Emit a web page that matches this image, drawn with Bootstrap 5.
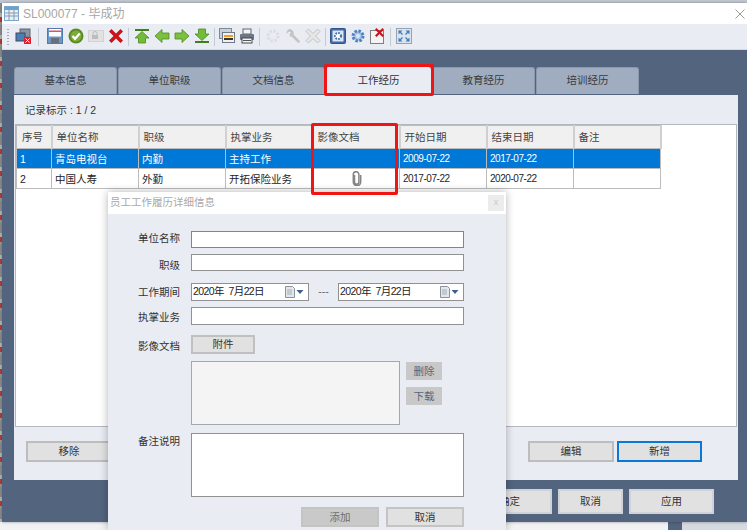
<!DOCTYPE html>
<html lang="zh-CN">
<head>
    <meta charset="UTF-8">
    <link rel="stylesheet" href="https://cdn.jsdelivr.net/npm/bootstrap@5.3.0/dist/css/bootstrap.min.css">
    <meta name="viewport" content="width=device-width, initial-scale=1.0">
    <title>SL000077 - 毕成功</title>
    <style>
        body {
            width: 747px;
            height: 530px;
            overflow: hidden;
            position: relative;
            background: #f1f2f4;
            font-family: "Liberation Sans", "Noto Sans CJK SC", sans-serif;
            font-size: 10.5px;
            color: #333;
        }

        /* desktop behind the window */
        .desk-top { position: absolute; left: 0; top: 0; width: 747px; height: 3px; background: #c3c9d3; }
        .desk-left {
            position: absolute; left: 0; top: 3px; width: 2px; height: 519px;
            background: repeating-linear-gradient(180deg, #8f8f8f 0 10px, #b9b9b9 10px 14px, #c23a2e 14px 19px, #9a9a9a 19px 22px);
        }
        .desk-blue { position: absolute; left: 668px; top: 522px; width: 14px; height: 8px; background: #53647f; }
        .desk-grey { position: absolute; left: 682px; top: 522px; width: 65px; height: 8px; background: #d5d9e0; }

        .app-win { position: absolute; left: 2px; top: 3px; width: 745px; height: 519px; box-shadow: 0 0 3px rgba(0,0,0,.35); }
        .win-title { height: 21px; background: #fff; color: #a6a6a6; font-size: 12px; }
        .win-title .title-ico { margin-left: 2px; margin-right: 4px; }
        .win-x { margin-left: auto; margin-right: 2px; }
        .tool-strip { height: 26px; background: #e9ecf2; border-bottom: 1px solid #d3d8e1; padding-left: 1px; }
        .gripper { width: 2px; height: 16px; margin-right: 4px; background: repeating-linear-gradient(180deg, #a5abb5 0 1px, transparent 1px 3px); }
        .tool-slot { width: 20px; height: 18px; }
        .tool-slot.slot-wide { width: 22px; }
        .tool-sep { width: 1px; height: 18px; background: #c4c9d2; margin: 0 5px; }
        .tool-sep.tight { margin: 0 2.25px; }
        .win-body { background: #53647f; padding: 17px 9px 0 12px; height: 472px; }

        /* tabs */
        .tab-row { border: 0; gap: 1px; height: 28px; }
        .tab-row .nav-link {
            height: 27px; width: 103px; padding: 0; border: 1px solid #8a98ad; border-bottom: 0; border-radius: 3px 3px 0 0;
            background: #a0adc1; color: #3a3a3a; font-size: 10.5px; line-height: 25px; text-align: center;
        }
        .tab-row .nav-link.active { background: #e9ecf2; color: #333; width: 105px; border-color: #e9ecf2; }
        .tab-panel { width: 724px; height: 385px; background: #e9ecf2; padding: 0 1px; }
        .rec-line { height: 29px; padding-left: 10px; line-height: 30px; font-size: 10.5px; }
        .grid-box { height: 303px; background: #fff; border: 1px solid #b4b8bf; }

        /* grid */
        .grid-tbl { width: 645px; table-layout: fixed; font-size: 10.5px; border-color: #bcbcbc; margin: 0; }
        .grid-tbl > :not(caption) > * > * { padding: 0 0 0 3px; height: 20px; line-height: 18px; border-width: 1px; border-color: #bcbcbc; white-space: nowrap; vertical-align: middle; }
        .grid-tbl > thead > tr > th { height: 23px; padding-left: 4px; font-weight: 400; background: #f0f0f0; color: #444; border-right-width: 2px; border-right-color: #d0d0d0; }
        .grid-tbl > thead > tr > th:first-child { padding-left: 5px; }
        .grid-tbl tr.sel-row > td { background: #0078d7; color: #fff; }
        .col-no { width: 35px; }
        .col-wide { width: 87px; }
        .cell-date { font-size: 10px; letter-spacing: -.45px; }
        .grid-tbl > tbody > tr > td.cell-clip { text-align: center; padding-left: 0; }
        .clip-ico { display: block; margin: 0 auto; }

        /* buttons */
        .btn-win { border: 2px solid #bdbdbd; border-radius: 0; background: #e1e1e1; color: #333; padding: 0; font-size: 10.5px; line-height: 1; }
        .btn-w86 { width: 86px; height: 21px; }
        .btn-focus { border-color: #0a78d4; height: 21px; }
        .panel-btns { padding: 14px 35px 0 11px; gap: 3px; }
        .foot-btns { padding: 9px 24px 0 0; gap: 6px; }
        .btn-foot { height: 25px; border-color: #cfd2d7; }
        .btn-w85 { width: 85px; }
        .btn-w65 { width: 65px; }

        /* dialog */
        .dlg-win { position: absolute; left: 108px; top: 192px; width: 398px; height: 338px; background: #e9ecf2; box-shadow: 0 0 8px rgba(0,0,0,.3); }
        .dlg-title { height: 22px; background: #fff; color: #a9a9a9; font-size: 10.5px; padding: 0 2px; }
        .dlg-close { margin-left: auto; width: 16px; height: 16px; background: #ececec; color: #c9c9c9; font-size: 9px; line-height: 15px; text-align: center; }
        .dlg-form { padding: 17px 0 0 0; }
        .lbl-cell { width: 72px; line-height: 12px; text-align: right; margin-right: 11px; flex: none; color: #333; }
        .lbl-up { padding-bottom: 3px; }
        .lbl-down { padding-top: 5px; }
        .lbl-nudge { padding-top: 2px; }
        .fld { border: 1px solid #919191; border-radius: 0; padding: 0 1px; background: #fff; font-size: 10.5px; height: 17px; min-height: 0; box-shadow: none; color: #222; }
        .fld-wide { width: 273px; }
        .fld-tall { height: 18px; }
        .form-control.fld-active { border-color: #3d97dd; }
        .fld-date1 { width: 118px; }
        .fld-date2 { width: 126px; }
        .date-text { letter-spacing: -.6px; }
        .date-dash { width: 29px; text-align: center; color: #666; }
        .btn-attach { width: 64px; height: 19px; border-color: #c0c0c0; }
        .file-box { width: 209px; height: 64px; background: #f4f4f4; border: 1px solid #a3a8b0; margin-left: 83px; }
        .side-btns { margin-left: 6px; gap: 7px; padding-top: 1px; }
        .btn-side { width: 36px; height: 18px; border: 1px solid #c8c8c8; background: #c8c8c8; color: #56657e; }
        .note-box { width: 273px; height: 64px; border: 1px solid #919191; background: #fff; }
        .dlg-btns { padding-right: 42px; gap: 7px; }
        .btn-dlg { width: 78px; height: 20px; border-color: #c4c4c4; }
        .btn-off { background: #c9c9c9; color: #6f6f6f; }
        .mt-6px { margin-top: 6px; }
        .mt-7px { margin-top: 7px; }
        .mt-8px { margin-top: 8px; }
        .mt-10px { margin-top: 10px; }
        .mt-12px { margin-top: 12px; }

        /* red marks drawn on the picture */
        .red-mark { position: absolute; border: 3px solid #f01414; border-radius: 2px; }
        .mark-tab { left: 324px; top: 64px; width: 110px; height: 32px; }
        .mark-col { left: 311px; top: 123px; width: 87px; height: 72px; }
    </style>
</head>
<body>
    <div class="desk-top"></div>
    <div class="desk-left"></div>
    <div class="desk-blue"></div>
    <div class="desk-grey"></div>

    <div class="app-win">
        <div class="win-title d-flex align-items-center">
            <svg class="title-ico" width="15" height="15" viewBox="0 0 15 15"><rect x=".5" y=".5" width="14" height="14" fill="#e6eef6" stroke="#7ba6c9"/><rect x="1" y="1" width="13" height="3" fill="#6ba3cf"/><path d="M1 7h13M1 10h13M5 4v10M10 4v10" stroke="#8a9bad"/></svg>
            <span>SL000077 - 毕成功</span>
            <svg class="win-x" width="10" height="10" viewBox="0 0 10 10"><path d="M.5.5l9 9M9.500.5l-9 9" stroke="#999"/></svg>
        </div>

        <div class="tool-strip d-flex align-items-center">
            <div class="gripper ms-1"></div>
            <div class="tool-slot d-flex justify-content-center"><svg width="16" height="16" viewBox="0 0 16 16"><rect x="5" y="1" width="10" height="8" fill="#8a94a3" stroke="#5c6673"/><rect x="1" y="5" width="9" height="8" fill="#4a7fb5" stroke="#3c4a5c"/><rect x="9" y="9" width="7" height="7" fill="#e0202c"/><path d="M10.500 10.500l4 4m0-4l-4 4" stroke="#fff"/></svg></div>
            <div class="tool-sep"></div>
            <div class="tool-slot slot-wide d-flex justify-content-center"><svg width="16" height="16" viewBox="0 0 16 16"><rect x=".5" y=".5" width="15" height="15" fill="#6f97c6" stroke="#4f7cb0"/><rect x="2" y="1" width="12" height="7.500" fill="#fff"/><rect x="2" y="2.500" width="12" height="1.500" fill="#e8505a"/><rect x="4" y="10" width="8" height="5" fill="#66717f"/></svg></div>
            <div class="tool-slot d-flex justify-content-center"><svg width="16" height="16" viewBox="0 0 16 16"><circle cx="8" cy="8" r="7.500" fill="#5c8a22"/><circle cx="8" cy="8" r="5.500" fill="#7cab38"/><path d="M4.500 8l2.500 2.800L11.800 5.500" fill="none" stroke="#fff" stroke-width="2.200"/></svg></div>
            <div class="tool-slot d-flex justify-content-center"><svg width="16" height="16" viewBox="0 0 16 16"><rect x=".5" y="2.500" width="15" height="11" fill="#e2e2e2" stroke="#d2d2d2"/><rect x="4" y="7" width="6" height="4" fill="#bdbdbd"/><path d="M5 7V5.500a2 2 0 0 1 4 0V7" fill="none" stroke="#bdbdbd"/></svg></div>
            <div class="tool-slot d-flex justify-content-center"><svg width="16" height="16" viewBox="0 0 16 16"><path d="M1 3.500L3.500 1 8 5.500 12.500 1 15 3.500 10.500 8 15 12.500 12.500 15 8 10.500 3.500 15 1 12.500 5.500 8z" fill="#c8141c"/></svg></div>
            <div class="tool-sep tight"></div>
            <div class="tool-slot d-flex justify-content-center"><svg width="16" height="16" viewBox="0 0 16 16"><rect x="1" y="1" width="14" height="2" fill="#3f7f1d"/><path d="M8 3.500L15 10h-3.500v5h-7v-5H1z" fill="#74bb38" stroke="#4d8a22" stroke-width=".8"/></svg></div>
            <div class="tool-slot d-flex justify-content-center"><svg width="16" height="16" viewBox="0 0 16 16"><path d="M1 8l7-6.500V5h7v6H8v3.500z" fill="#7cc040" stroke="#4d8a22" stroke-width=".8"/></svg></div>
            <div class="tool-slot d-flex justify-content-center"><svg width="16" height="16" viewBox="0 0 16 16"><path d="M15 8L8 1.500V5H1v6h7v3.500z" fill="#7cc040" stroke="#4d8a22" stroke-width=".8"/></svg></div>
            <div class="tool-slot d-flex justify-content-center"><svg width="16" height="16" viewBox="0 0 16 16"><rect x="1" y="13" width="14" height="2" fill="#3f7f1d"/><path d="M8 12.500L15 6h-3.500V1h-7v5H1z" fill="#74bb38" stroke="#4d8a22" stroke-width=".8"/></svg></div>
            <div class="tool-sep tight"></div>
            <div class="tool-slot d-flex justify-content-center"><svg width="16" height="16" viewBox="0 0 16 16"><rect x=".5" y=".5" width="12" height="10" fill="#c9d2dc" stroke="#7f8a98"/><rect x="3.500" y="4.500" width="12" height="10" fill="#f0f0f0" stroke="#6f7a88"/><rect x="5" y="7" width="9" height="2" fill="#f0a020"/><rect x="5" y="10" width="9" height="2" fill="#333"/></svg></div>
            <div class="tool-slot d-flex justify-content-center"><svg width="16" height="16" viewBox="0 0 16 16"><rect x="4" y="1" width="8" height="5" fill="#f4f4f4" stroke="#5f6873"/><rect x="1" y="6" width="14" height="6" rx="1" fill="#6d7681"/><rect x="3" y="10" width="10" height="5" fill="#f4f4f4" stroke="#434a53"/><path d="M4 12.500h8" stroke="#555"/></svg></div>
            <div class="tool-sep tight"></div>
            <div class="tool-slot d-flex justify-content-center"><svg width="16" height="16" viewBox="0 0 16 16"><circle cx="8" cy="8" r="5" fill="none" stroke="#dcdcdc" stroke-width="3" stroke-dasharray="2.200 1.700"/></svg></div>
            <div class="tool-slot d-flex justify-content-center"><svg width="16" height="16" viewBox="0 0 16 16"><path d="M6 6l7.500 7.500" stroke="#c4c4c4" stroke-width="2.600" stroke-linecap="round"/><path d="M6.500 1.500a3.500 3.500 0 0 0-4.800 4.300L3.800 3.700l2 .4.400 2-2.100 2.100a3.500 3.500 0 0 0 4.300-4.800z" fill="#c4c4c4"/></svg></div>
            <div class="tool-slot d-flex justify-content-center"><svg width="16" height="16" viewBox="0 0 16 16"><path d="M1 3.500L3.500 1 8 5.500 12.500 1 15 3.500 10.500 8 15 12.500 12.500 15 8 10.500 3.500 15 1 12.500 5.500 8z" fill="#e6e6e6" stroke="#c4c4c4"/></svg></div>
            <div class="tool-sep tight"></div>
            <div class="tool-slot d-flex justify-content-center"><svg width="16" height="16" viewBox="0 0 16 16"><rect x=".5" y=".5" width="15" height="15" rx="1" fill="#3f69a8" stroke="#34558a"/><rect x="2.500" y="2.500" width="11" height="11" fill="#dbe6f3"/><circle cx="8" cy="8" r="3" fill="#fff" stroke="#3f69a8" stroke-width="2" stroke-dasharray="1.600 1.200"/></svg></div>
            <div class="tool-slot d-flex justify-content-center"><svg width="16" height="16" viewBox="0 0 16 16"><circle cx="8" cy="8" r="5" fill="#a9c4e6" stroke="#4f7fc0" stroke-width="3" stroke-dasharray="2.400 1.500"/><circle cx="8" cy="8" r="2" fill="#dbe6f3"/></svg></div>
            <div class="tool-slot d-flex justify-content-center"><svg width="16" height="16" viewBox="0 0 16 16"><rect x=".5" y="2.500" width="13" height="13" fill="#f4f4f4" stroke="#7f7f7f"/><path d="M5 1.500L6.500 0 9.500 3 12.500 0 14 1.500 11 4.500 14 7.500 12.500 9 9.500 6 6.500 9 5 7.500 8 4.500z" fill="#c8141c"/></svg></div>
            <div class="tool-sep tight"></div>
            <div class="tool-slot d-flex justify-content-center"><svg width="16" height="16" viewBox="0 0 16 16"><rect x=".5" y=".5" width="15" height="15" fill="#dfe4ea" stroke="#9aa3ad"/><path d="M2.500 2.500h4l-4 4zM13.500 2.500v4l-4-4zM2.500 13.500v-4l4 4zM13.500 13.500h-4l4-4z" fill="#3f7fc4"/><path d="M3 3l3.500 3.500M13 3L9.500 6.500M3 13l3.500-3.500M13 13L9.500 9.500" stroke="#3f7fc4" stroke-width="1.400"/></svg></div>
        </div>

        <div class="win-body">
            <ul class="nav nav-tabs tab-row">
                <li class="nav-item"><a class="nav-link">基本信息</a></li>
                <li class="nav-item"><a class="nav-link">单位职级</a></li>
                <li class="nav-item"><a class="nav-link">文档信息</a></li>
                <li class="nav-item"><a class="nav-link active">工作经历</a></li>
                <li class="nav-item"><a class="nav-link">教育经历</a></li>
                <li class="nav-item"><a class="nav-link">培训经历</a></li>
            </ul>
            <div class="tab-panel">
                <div class="rec-line">记录标示 : 1 / 2</div>
                <div class="grid-box">
                    <table class="table table-bordered grid-tbl">
                        <colgroup>
                            <col class="col-no"><col class="col-wide"><col class="col-wide"><col class="col-wide"><col class="col-wide"><col class="col-wide"><col class="col-wide"><col class="col-wide">
                        </colgroup>
                        <thead>
                            <tr><th>序号</th><th>单位名称</th><th>职级</th><th>执掌业务</th><th>影像文档</th><th>开始日期</th><th>结束日期</th><th>备注</th></tr>
                        </thead>
                        <tbody>
                            <tr class="sel-row"><td>1</td><td>青岛电视台</td><td>内勤</td><td>主持工作</td><td></td><td class="cell-date">2009-07-22</td><td class="cell-date">2017-07-22</td><td></td></tr>
                            <tr><td>2</td><td>中国人寿</td><td>外勤</td><td>开拓保险业务</td>
                                <td class="cell-clip"><svg class="clip-ico" width="11" height="15" viewBox="0 0 11 15"><path d="M3.500 4v7a2.200 2.200 0 0 0 4.400 0V3.500a2.800 2.800 0 0 0-5.600 0V11a3.600 3.600 0 0 0 7.400 0V4" fill="none" stroke="#858585" stroke-width="1.500"/></svg></td>
                                <td class="cell-date">2017-07-22</td><td class="cell-date">2020-07-22</td><td></td></tr>
                        </tbody>
                    </table>
                </div>
                <div class="panel-btns d-flex">
                    <button class="btn btn-win btn-w86 me-auto">移除</button>
                    <button class="btn btn-win btn-w86">编辑</button>
                    <button class="btn btn-win btn-w85 btn-focus">新增</button>
                </div>
            </div>
            <div class="foot-btns d-flex justify-content-end">
                <button class="btn btn-win btn-foot btn-w85">确定</button>
                <button class="btn btn-win btn-foot btn-w65">取消</button>
                <button class="btn btn-win btn-foot btn-w85">应用</button>
            </div>
        </div>
    </div>

    <div class="dlg-win">
        <div class="dlg-title d-flex align-items-center">
            <span>员工工作履历详细信息</span>
            <span class="dlg-close">x</span>
        </div>
        <div class="dlg-form">
            <div class="d-flex align-items-center">
                <label class="lbl-cell lbl-up">单位名称</label>
                <input class="form-control fld fld-wide fld-active" type="text">
            </div>
            <div class="d-flex align-items-center mt-6px">
                <label class="lbl-cell lbl-down">职级</label>
                <input class="form-control fld fld-wide" type="text">
            </div>
            <div class="d-flex align-items-center mt-12px">
                <label class="lbl-cell">工作期间</label>
                <div class="fld fld-tall fld-date1 d-flex align-items-center justify-content-between">
                    <span class="date-text">2020年&nbsp;&nbsp;7月22日</span>
                    <svg width="23" height="12" viewBox="0 0 23 12"><path d="M1.500.5h7l2 2v9h-9z" fill="#e3e6ea" stroke="#8a929d"/><path d="M3 4h5M3 6h5M3 8h5" stroke="#a4abb5"/><path d="M12.500 4h7L16 8z" fill="#3f5f8f"/></svg>
                </div>
                <span class="date-dash">---</span>
                <div class="fld fld-tall fld-date2 d-flex align-items-center justify-content-between">
                    <span class="date-text">2020年&nbsp;&nbsp;7月22日</span>
                    <svg width="23" height="12" viewBox="0 0 23 12"><path d="M1.500.5h7l2 2v9h-9z" fill="#e3e6ea" stroke="#8a929d"/><path d="M3 4h5M3 6h5M3 8h5" stroke="#a4abb5"/><path d="M12.500 4h7L16 8z" fill="#3f5f8f"/></svg>
                </div>
            </div>
            <div class="d-flex align-items-center mt-6px">
                <label class="lbl-cell lbl-nudge">执掌业务</label>
                <input class="form-control fld fld-tall fld-wide" type="text">
            </div>
            <div class="d-flex align-items-center mt-10px">
                <label class="lbl-cell lbl-nudge">影像文档</label>
                <button class="btn btn-win btn-attach">附件</button>
            </div>
            <div class="d-flex mt-7px">
                <div class="file-box"></div>
                <div class="side-btns d-flex flex-column">
                    <button class="btn btn-win btn-side">删除</button>
                    <button class="btn btn-win btn-side">下载</button>
                </div>
            </div>
            <div class="d-flex mt-8px">
                <label class="lbl-cell lbl-nudge">备注说明</label>
                <div class="note-box"></div>
            </div>
            <div class="dlg-btns d-flex justify-content-end mt-10px">
                <button class="btn btn-win btn-dlg btn-off">添加</button>
                <button class="btn btn-win btn-dlg">取消</button>
            </div>
        </div>
    </div>

    <div class="red-mark mark-tab"></div>
    <div class="red-mark mark-col"></div>

    <script src="https://cdn.jsdelivr.net/npm/bootstrap@5.3.0/dist/js/bootstrap.bundle.min.js"></script>
</body>
</html>
